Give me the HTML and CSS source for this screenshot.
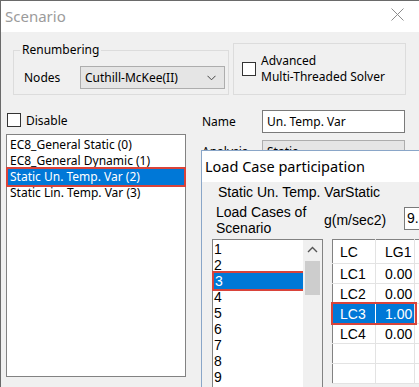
FILE: index.html
```html
<!DOCTYPE html>
<html>
<head>
<meta charset="utf-8">
<link rel="stylesheet" href="styles.css">
</head>
<body>
<div class="dialog">
  <div class="titlebar">
    <span class="title">Scenario</span>
    <svg class="close" width="13" height="13" viewBox="0 0 13 13"><path d="M0.5 0.5 L12.5 12.5 M12.5 0.5 L0.5 12.5" stroke="#8c8c8c" stroke-width="1" fill="none"/></svg>
  </div>
  <div class="content">
    <div class="top-row">
      <fieldset class="group g1">
        <legend>Renumbering</legend>
        <div class="nodes-row">
          <span class="nodes-label">Nodes</span>
          <div class="combo">
            <span>Cuthill-McKee(II)</span>
            <svg width="9" height="6" viewBox="0 0 9 6"><path d="M0.5 0.8 L4.5 4.8 L8.5 0.8" stroke="#444" stroke-width="1" fill="none"/></svg>
          </div>
        </div>
      </fieldset>
      <div class="group g2">
        <span class="check"></span>
        <span class="g2-text">Advanced<br>Multi-Threaded Solver</span>
      </div>
    </div>
    <div class="lower">
      <div class="left-col">
        <div class="disable-row"><span class="check"></span><span>Disable</span></div>
        <div class="listbox">
          <div class="item">EC8_General Static (0)</div>
          <div class="item">EC8_General Dynamic (1)</div>
          <div class="item sel">Static Un. Temp. Var (2)</div>
          <div class="item">Static Lin. Temp. Var (3)</div>
        </div>
      </div>
      <div class="right-col">
        <div class="field-row"><span class="flabel">Name</span><div class="textbox">Un. Temp. Var</div></div>
        <div class="field-row analysis"><span class="flabel">Analysis</span><div class="combo wide"><span>Static</span></div></div>
      </div>
    </div>
  </div>
</div>

<div class="lcwin">
  <div class="lc-title">Load Case participation</div>
  <div class="lc-body">
    <div class="lc-sub">Static Un. Temp. VarStatic</div>
    <div class="lc-row2">
      <div class="lc-lbl">Load Cases of<br>Scenario</div>
      <div class="lc-g">g(m/sec2)</div>
      <div class="lc-input">9.8</div>
    </div>
    <div class="lc-lists">
      <div class="lc-list">
        <div class="lc-items">
          <div class="n">1</div>
          <div class="n">2</div>
          <div class="n sel">3</div>
          <div class="n">4</div>
          <div class="n">5</div>
          <div class="n">6</div>
          <div class="n">7</div>
          <div class="n">8</div>
          <div class="n">9</div>
        </div>
        <div class="vscroll">
          <div class="arrow"><svg width="11" height="7" viewBox="0 0 11 7"><path d="M1 6 L5.5 1.5 L10 6" stroke="#555" stroke-width="1.4" fill="none"/></svg></div>
          <div class="thumb"></div>
        </div>
      </div>
      <table class="grid">
        <tr class="hdr"><td>LC</td><td>LG1</td><td></td></tr>
        <tr><td>LC1</td><td>0.00</td><td></td></tr>
        <tr><td>LC2</td><td>0.00</td><td></td></tr>
        <tr class="selrow"><td>LC3</td><td>1.00</td><td></td></tr>
        <tr><td>LC4</td><td>0.00</td><td></td></tr>
        <tr><td></td><td></td><td></td></tr>
        <tr><td></td><td></td><td></td></tr>
      </table>
    </div>
  </div>
</div>
</body>
</html>
```

FILE: styles.css
```css
html, body {
  margin: 0;
  padding: 0;
}
body {
  width: 419px;
  height: 387px;
  overflow: hidden;
  position: relative;
  font-family: "Noto Sans", "DejaVu Sans", sans-serif;
  font-size: 12px;
  color: #000;
  background: #f0f0f0;
}
.dialog {
  box-sizing: border-box;
  height: 387px;
  border-top: 1px solid #6a6a6a;
  border-left: 1px solid #6a6a6a;
  background: #f0f0f0;
}
.titlebar {
  height: 31px;
  background: #fff;
  display: flex;
  align-items: center;
  justify-content: space-between;
  padding: 0 15px 0 4px;
}
.title {
  font-size: 15px;
  color: #9b9b9b;
  margin-top: -2px;
}
.close {
  margin-top: -4px;
}
.content {
  padding: 0 0 0 5px;
}
.top-row {
  display: flex;
  gap: 4px;
  margin-left: 7px;
  margin-top: 11px;
}
.group {
  box-sizing: border-box;
  height: 52px;
  border: 1px solid #dcdcdc;
  margin: 0;
}
fieldset.group {
  padding: 0;
  width: 216px;
}
fieldset.group legend {
  padding: 0 2px;
  margin-left: 6px;
  line-height: 14px;
  font-size: 12px;
}
.nodes-row {
  display: flex;
  align-items: center;
  margin-top: 9px;
}
.nodes-label {
  margin-left: 10px;
  width: 56px;
}
.combo {
  box-sizing: border-box;
  width: 145px;
  height: 23px;
  background: #e5e5e5;
  border: 1px solid #adadad;
  display: flex;
  align-items: center;
  justify-content: space-between;
  padding: 0 8px 0 4px;
}
.g2 {
  width: 173px;
  display: flex;
  align-items: center;
  padding-left: 8px;
}
.check {
  box-sizing: border-box;
  width: 14px;
  height: 14px;
  background: #fff;
  border: 1px solid #333;
  flex: none;
}
.g2-text {
  margin-left: 5px;
  line-height: 16px;
  margin-top: -1px;
}
.lower {
  display: flex;
  margin-top: 15px;
}
.left-col {
  width: 180px;
}
.disable-row {
  display: flex;
  align-items: center;
  gap: 5px;
  margin-top: 3px;
  margin-left: 1px;
  height: 14px;
}
.listbox {
  box-sizing: border-box;
  margin-top: 7px;
  height: 243px;
  background: #fff;
  border: 1px solid #828282;
  padding-top: 2px;
}
.item {
  line-height: 16px;
  padding-left: 3px;
  white-space: nowrap;
}
.item.sel {
  background: #0078d7;
  color: #fff;
  outline: 2px solid #d9433a;
  margin: 0 1px;
  padding-left: 2px;
}
.right-col {
  margin-left: 16px;
}
.field-row {
  display: flex;
  align-items: center;
}
.flabel {
  width: 60px;
}
.textbox {
  box-sizing: border-box;
  width: 143px;
  height: 23px;
  background: #fff;
  border: 1px solid #7a7a7a;
  padding-left: 4px;
  line-height: 21px;
}
.analysis {
  margin-top: 7px;
}
.combo.wide {
  width: 143px;
}

/* Load case window */
.lcwin {
  position: absolute;
  left: 201px;
  top: 150px;
  width: 280px;
  height: 260px;
  border-left: 1px solid #8aa6c8;
  border-top: 1px solid #8aa6c8;
  background: #f0f0f0;
  font-family: "Liberation Sans", Arial, sans-serif;
  font-size: 14px;
}
.lc-title {
  height: 31px;
  background: #fff;
  font-family: "Noto Sans", "DejaVu Sans", sans-serif;
  font-size: 14.5px;
  line-height: 31px;
  padding-left: 3px;
}
.lc-body {
  padding-left: 10px;
}
.lc-sub {
  line-height: 16px;
  margin-top: 2px;
  padding-left: 6px;
}
.lc-row2 {
  display: flex;
  align-items: center;
  margin-top: 4px;
}
.lc-lbl {
  width: 112px;
  line-height: 16px;
  padding-left: 4px;
  box-sizing: border-box;
  flex: none;
}
.lc-g {
  width: 80px;
  flex: none;
}
.lc-input {
  box-sizing: border-box;
  width: 40px;
  height: 23px;
  background: #fff;
  border: 1px solid #7a7a7a;
  padding-left: 2px;
  line-height: 21px;
  margin-top: -3px;
  flex: none;
}
.lc-lists {
  display: flex;
  margin-top: 3px;
  gap: 9px;
  align-items: flex-start;
}
.lc-list {
  box-sizing: border-box;
  flex: none;
  width: 111px;
  height: 160px;
  border: 1px solid #828282;
  background: #fff;
  display: flex;
}
.lc-items {
  flex: 1;
  padding-top: 1px;
}
.n {
  line-height: 16px;
  padding-left: 1px;
}
.n.sel {
  background: #0078d7;
  color: #fff;
  outline: 2px solid #d9433a;
  margin-left: 1px;
}
.vscroll {
  width: 19px;
  background: #f0f0f0;
}
.arrow {
  height: 18px;
  display: flex;
  align-items: center;
  justify-content: center;
}
.thumb {
  margin: 3px 2px 0;
  height: 34px;
  background: #cdcdcd;
}
.grid {
  flex: none;
  border-collapse: collapse;
  background: #fff;
  border-left: 1px solid #828282;
  border-top: 1px solid #828282;
}
.grid td {
  box-sizing: border-box;
  height: 20px;
  padding: 0 0 0 7px;
  border-right: 1px solid #e3e3e3;
  border-bottom: 1px solid #e3e3e3;
  white-space: nowrap;
}
.grid td:nth-child(1) { width: 43px; }
.grid td:nth-child(2) { width: 39px; padding-left: 9px; }
.grid td:nth-child(3) { width: 40px; }
.grid tr.hdr td {
  height: 24px;
}
.grid tr.selrow td:nth-child(1),
.grid tr.selrow td:nth-child(2) {
  background: #0078d7;
  color: #fff;
}
.grid tr.selrow td:nth-child(1) {
  border-right: 1px solid #fff;
  position: relative;
}
.grid tr.selrow td:nth-child(1)::after {
  content: "";
  position: absolute;
  left: -2px;
  top: -2px;
  width: 86px;
  height: 23px;
  border: 2px solid #d9433a;
  box-sizing: border-box;
}
```
